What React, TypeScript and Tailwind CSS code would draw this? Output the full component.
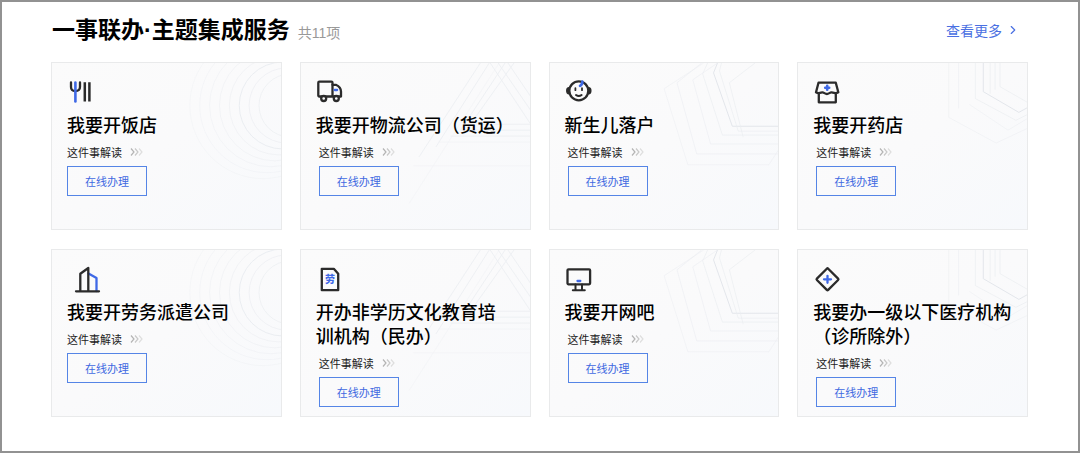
import React from 'react';
import { ChevronRight } from 'lucide-react';

const INK = '#2b2b2b';
const BLUE = '#3f69e6';

const Icon: React.FC<{ children: React.ReactNode }> = ({ children }) => (
    <svg
        viewBox="0 0 36 28"
        className="block h-7 w-9"
        fill="none"
        stroke={INK}
        strokeWidth={2.3}
        strokeLinejoin="round"
        strokeLinecap="round"
        aria-hidden="true"
    >
        {children}
    </svg>
);

const ForkIcon = () => (
    <Icon>
        <path d="M4 4.5V9c0 2.8 1.6 4 4.3 4s4.700-1.200 4.700-4V4.500" />
        <path d="M8.400 4.500V23.500" stroke={BLUE} strokeWidth={2.6} />
        <path d="M17.800 4.300V23.500M22.400 4.300V23.500" strokeWidth={2.5} strokeLinecap="butt" />
    </Icon>
);

const TruckIcon = () => (
    <Icon>
        <rect x="2.3" y="3.700" width="14.2" height="14.800" rx="1" />
        <path d="M16.500 6.800h3.300c2.700 1.200 5.200 4 5.200 6.800v4.900h-8.500" />
        <circle cx="7.700" cy="20.500" r="2.500" fill="#fafafa" />
        <circle cx="20.300" cy="20.500" r="2.500" fill="#fafafa" />
        <path d="M18.700 12h2.400" stroke={BLUE} />
    </Icon>
);

const BabyIcon = () => (
    <Icon>
        <path d="M4 9.800c-3 0-3 6 0 6zM23.600 9.800c3 0 3 6 0 6z" fill={INK} strokeWidth={1.4} />
        <circle cx="13.800" cy="12.800" r="9.500" />
        <path d="M10.400 10.200v2M17 10.200v2" strokeWidth={1.8} />
        <path d="M11 17c1.600 1.200 4 1.200 5.600 0" strokeWidth={2} />
        <path d="M17.300 3.600c.3 2-.6 3.200-2.300 4.200" stroke={BLUE} strokeWidth={2.6} />
    </Icon>
);

const PharmacyIcon = () => (
    <Icon>
        <path d="M5.500 4.700h17.300l2.500 9.500c-2.800 2-5.200.4-6.800.2-1.600-.2-2.600 1.600-4.600 1.600s-3-1.800-4.600-1.600c-1.600.2-3.800 1.600-6.300-.2z" />
        <path d="M5.800 15.500V24.300h17V15.500" />
        <path d="M14.200 7.700v4M12.200 9.700h4" stroke={BLUE} strokeWidth={2.6} />
    </Icon>
);

const BuildingIcon = () => (
    <Icon>
        <path d="M21.500 8.500l8 4.500V26" stroke={BLUE} />
        <path d="M13.300 26V8.800l8-5.800v23M9 26.300h23" />
    </Icon>
);

const LaborDocIcon = () => (
    <Icon>
        <path d="M5.800 3.800h12l4.400 5v16.400H5.800z" />
        <text
            x="14"
            y="18.400"
            textAnchor="middle"
            fontSize="10"
            fontWeight="900"
            fill={BLUE}
            stroke="none"
        >
            劳
        </text>
    </Icon>
);

const MonitorIcon = () => (
    <Icon>
        <rect x="2.500" y="4.300" width="22.600" height="15" rx="1" />
        <path d="M10.500 19.500v5.500M17 19.500v5.500M7.800 25.200h12" strokeWidth={2} />
        <path d="M12.500 16h2.800" stroke={BLUE} />
    </Icon>
);

const ClinicIcon = () => (
    <Icon>
        <rect x="6.500" y="6.300" width="16" height="16" rx="1" transform="rotate(45 14.500 14.300)" />
        <path d="M14.500 10.800v7M11 14.300h7" stroke={BLUE} />
    </Icon>
);

const rings = [0, 1, 2, 3, 4, 5, 6, 7];

// Faint line drawings in the top right corner, one per column
const patterns = [
    <g>
        {rings.map((i) => (
            <circle key={i} cx={240 - i * 4} cy={43} r={32 + i * 6} opacity={i === 2 ? 1 : 0.7 - i * 0.05} />
        ))}
    </g>,
    <g opacity="0.7">
        <path d="M189 0L135 85M180 0L118 95M205 0L160 68M214 0L170 62" />
        <path d="M190 0L231 62M198 0L231 48M208 0L231 34" />
        <path d="M179 62h52M160 68h71M150 74h81" />
        <path d="M199 0L108 142M138 80h93M112 104h119" opacity="0.4" />
    </g>,
    <g>
        <path d="M168 0L164 10L183 64H231" stroke="#e3e6eb" />
        <path d="M172 0L170 8L189 69H231M158 0L153 11L173 73H231M206 0L180 20L194 75" opacity="0.7" />
        <path d="M168 0L143 17L161 82H231M152 0L127 20L147 92H231" opacity="0.6" />
        <path d="M154 0L114 26L138 103H220L231 86" opacity="0.5" />
    </g>,
    <g>
        <path d="M186 0V29L222 50L231 45" stroke="#e3e6eb" />
        <path d="M178 0V36L219 58L231 52M193 0V31M198 0V27M203 0V24L231 40" opacity="0.7" />
        <path d="M161 0V46M172 42L211 68L231 56M151 0V55L199 81L231 66" opacity="0.5" />
    </g>,
];

const Pattern: React.FC<{ column: number }> = ({ column }) => (
    <svg
        viewBox="0 0 230 168"
        preserveAspectRatio="xMaxYMin meet"
        className="pointer-events-none absolute inset-0 h-full w-full"
        fill="none"
        stroke="#eaedf1"
        aria-hidden="true"
    >
        {patterns[column]}
    </svg>
);

const Arrows = () => (
    <svg viewBox="0 0 14 10" className="h-2.5 w-3.5" fill="none" strokeWidth={1.2} aria-hidden="true">
        <path d="M1 1.500l3 3.500-3 3.500" stroke="#b4b4b4" />
        <path d="M5 1.500l3 3.500-3 3.500" stroke="#c8c8c8" />
        <path d="M9 1.500l3 3.500-3 3.500" stroke="#dedede" />
    </svg>
);

const services = [
    { title: '我要开饭店', icon: <ForkIcon /> },
    { title: '我要开物流公司（货运）', icon: <TruckIcon /> },
    { title: '新生儿落户', icon: <BabyIcon /> },
    { title: '我要开药店', icon: <PharmacyIcon /> },
    { title: '我要开劳务派遣公司', icon: <BuildingIcon /> },
    { title: '开办非学历文化教育培\n训机构（民办）', icon: <LaborDocIcon /> },
    { title: '我要开网吧', icon: <MonitorIcon /> },
    { title: '我要办一级以下医疗机构\n（诊所除外）', icon: <ClinicIcon /> },
];

const App: React.FC = () => {
    return (
        <div className="min-h-screen border-2 border-[#929292] bg-white font-['Noto_Sans_CJK_SC',sans-serif]">
            <header className="flex items-center justify-between pt-2.5 pr-[58px] pl-[50px]">
                <div className="flex items-baseline gap-2 font-['Liberation_Sans','Noto_Sans_CJK_SC',sans-serif]">
                    <h1 className="text-[23px] leading-9 font-bold text-black">一事联办·主题集成服务</h1>
                    <span className="text-sm text-[#999999]">共11项</span>
                </div>
                <a href="#more" className="flex items-center gap-1 text-sm text-[#4a70e2]">
                    查看更多
                    <ChevronRight size={14} />
                </a>
            </header>

            <main className="grid grid-cols-4 gap-x-[18px] gap-y-[19px] pt-3.5 pr-[50px] pb-8 pl-[49px]">
                {services.map((service, idx) => (
                    <article
                        key={service.title}
                        className="relative min-h-[168px] overflow-hidden border border-[#e9eaeb] bg-gradient-to-br from-[#fbfbfb] via-[#fafafb] to-[#f7f9fc] px-[15px] pt-[15px] pb-2"
                    >
                        <Pattern column={idx % 4} />
                        <div className="relative">
                            {service.icon}
                            <h2 className="mt-1.5 text-lg leading-6 font-medium whitespace-pre text-black">
                                {service.title}
                            </h2>
                            <div className={idx % 4 === 0 ? '' : 'pl-[3px]'}>
                                <a
                                    href="#guide"
                                    className="mt-2 flex w-fit items-center gap-2 text-[11px] leading-4 text-[#222222]"
                                >
                                    这件事解读
                                    <Arrows />
                                </a>
                                <button
                                    type="button"
                                    className="mt-1.5 flex h-[30px] w-20 cursor-pointer items-center justify-center border border-[#5585e6] text-[11px] text-[#4169e1]"
                                >
                                    在线办理
                                </button>
                            </div>
                        </div>
                    </article>
                ))}
            </main>
        </div>
    );
};

export default App;
